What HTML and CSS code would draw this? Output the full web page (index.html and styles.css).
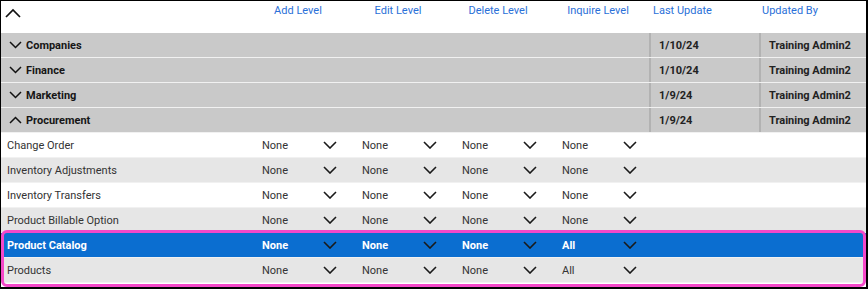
FILE: index.html
```html
<!DOCTYPE html>
<html lang="en">
<head>
<meta charset="UTF-8" />
<meta name="viewport" content="width=device-width, initial-scale=1" />
<title>Security Levels</title>
<link rel="stylesheet" href="styles.css">
</head>
<body>
<div class="levels">
  <div class="row head">
    <div class="toggle-all">
      <svg width="16" height="10" viewBox="0 0 16 10"><polyline points="1,9 8,2 15,9" fill="none" stroke="#111" stroke-width="1.7"/></svg>
    </div>
    <div class="hd">Add Level</div>
    <div class="hd">Edit Level</div>
    <div class="hd">Delete Level</div>
    <div class="hd">Inquire Level</div>
    <div class="hd hd-date">Last Update</div>
    <div class="hd hd-by">Updated By</div>
  </div>

  <div class="row group">
    <div class="group-name"><svg width="13" height="8" viewBox="0 0 13 8"><polyline points="1,1 6.5,6.5 12,1" fill="none" stroke="#111" stroke-width="1.5"/></svg>Companies</div>
    <div class="date">1/10/24</div>
    <div class="by">Training Admin2</div>
  </div>
  <div class="row group">
    <div class="group-name"><svg width="13" height="8" viewBox="0 0 13 8"><polyline points="1,1 6.5,6.5 12,1" fill="none" stroke="#111" stroke-width="1.5"/></svg>Finance</div>
    <div class="date">1/10/24</div>
    <div class="by">Training Admin2</div>
  </div>
  <div class="row group">
    <div class="group-name"><svg width="13" height="8" viewBox="0 0 13 8"><polyline points="1,1 6.5,6.5 12,1" fill="none" stroke="#111" stroke-width="1.5"/></svg>Marketing</div>
    <div class="date">1/9/24</div>
    <div class="by">Training Admin2</div>
  </div>
  <div class="row group">
    <div class="group-name"><svg width="13" height="8" viewBox="0 0 13 8"><polyline points="1,7 6.5,1.5 12,7" fill="none" stroke="#111" stroke-width="1.5"/></svg>Procurement</div>
    <div class="date">1/9/24</div>
    <div class="by">Training Admin2</div>
  </div>

  <div class="row item">
    <div class="name">Change Order</div>
    <div class="lvl"><span>None</span><svg width="14" height="8" viewBox="0 0 14 8"><polyline points="1,1 7,7 13,1" fill="none" stroke="#1a1a1a" stroke-width="1.6"/></svg></div>
    <div class="lvl"><span>None</span><svg width="14" height="8" viewBox="0 0 14 8"><polyline points="1,1 7,7 13,1" fill="none" stroke="#1a1a1a" stroke-width="1.6"/></svg></div>
    <div class="lvl"><span>None</span><svg width="14" height="8" viewBox="0 0 14 8"><polyline points="1,1 7,7 13,1" fill="none" stroke="#1a1a1a" stroke-width="1.6"/></svg></div>
    <div class="lvl"><span>None</span><svg width="14" height="8" viewBox="0 0 14 8"><polyline points="1,1 7,7 13,1" fill="none" stroke="#1a1a1a" stroke-width="1.6"/></svg></div>
  </div>
  <div class="row item alt">
    <div class="name">Inventory Adjustments</div>
    <div class="lvl"><span>None</span><svg width="14" height="8" viewBox="0 0 14 8"><polyline points="1,1 7,7 13,1" fill="none" stroke="#1a1a1a" stroke-width="1.6"/></svg></div>
    <div class="lvl"><span>None</span><svg width="14" height="8" viewBox="0 0 14 8"><polyline points="1,1 7,7 13,1" fill="none" stroke="#1a1a1a" stroke-width="1.6"/></svg></div>
    <div class="lvl"><span>None</span><svg width="14" height="8" viewBox="0 0 14 8"><polyline points="1,1 7,7 13,1" fill="none" stroke="#1a1a1a" stroke-width="1.6"/></svg></div>
    <div class="lvl"><span>None</span><svg width="14" height="8" viewBox="0 0 14 8"><polyline points="1,1 7,7 13,1" fill="none" stroke="#1a1a1a" stroke-width="1.6"/></svg></div>
  </div>
  <div class="row item">
    <div class="name">Inventory Transfers</div>
    <div class="lvl"><span>None</span><svg width="14" height="8" viewBox="0 0 14 8"><polyline points="1,1 7,7 13,1" fill="none" stroke="#1a1a1a" stroke-width="1.6"/></svg></div>
    <div class="lvl"><span>None</span><svg width="14" height="8" viewBox="0 0 14 8"><polyline points="1,1 7,7 13,1" fill="none" stroke="#1a1a1a" stroke-width="1.6"/></svg></div>
    <div class="lvl"><span>None</span><svg width="14" height="8" viewBox="0 0 14 8"><polyline points="1,1 7,7 13,1" fill="none" stroke="#1a1a1a" stroke-width="1.6"/></svg></div>
    <div class="lvl"><span>None</span><svg width="14" height="8" viewBox="0 0 14 8"><polyline points="1,1 7,7 13,1" fill="none" stroke="#1a1a1a" stroke-width="1.6"/></svg></div>
  </div>
  <div class="row item alt">
    <div class="name">Product Billable Option</div>
    <div class="lvl"><span>None</span><svg width="14" height="8" viewBox="0 0 14 8"><polyline points="1,1 7,7 13,1" fill="none" stroke="#1a1a1a" stroke-width="1.6"/></svg></div>
    <div class="lvl"><span>None</span><svg width="14" height="8" viewBox="0 0 14 8"><polyline points="1,1 7,7 13,1" fill="none" stroke="#1a1a1a" stroke-width="1.6"/></svg></div>
    <div class="lvl"><span>None</span><svg width="14" height="8" viewBox="0 0 14 8"><polyline points="1,1 7,7 13,1" fill="none" stroke="#1a1a1a" stroke-width="1.6"/></svg></div>
    <div class="lvl"><span>None</span><svg width="14" height="8" viewBox="0 0 14 8"><polyline points="1,1 7,7 13,1" fill="none" stroke="#1a1a1a" stroke-width="1.6"/></svg></div>
  </div>
  <div class="row item selected">
    <div class="name">Product Catalog</div>
    <div class="lvl"><span>None</span><svg width="14" height="8" viewBox="0 0 14 8"><polyline points="1,1 7,7 13,1" fill="none" stroke="#1a1a1a" stroke-width="1.6"/></svg></div>
    <div class="lvl"><span>None</span><svg width="14" height="8" viewBox="0 0 14 8"><polyline points="1,1 7,7 13,1" fill="none" stroke="#1a1a1a" stroke-width="1.6"/></svg></div>
    <div class="lvl"><span>None</span><svg width="14" height="8" viewBox="0 0 14 8"><polyline points="1,1 7,7 13,1" fill="none" stroke="#1a1a1a" stroke-width="1.6"/></svg></div>
    <div class="lvl"><span>All</span><svg width="14" height="8" viewBox="0 0 14 8"><polyline points="1,1 7,7 13,1" fill="none" stroke="#1a1a1a" stroke-width="1.6"/></svg></div>
  </div>
  <div class="row item alt">
    <div class="name">Products</div>
    <div class="lvl"><span>None</span><svg width="14" height="8" viewBox="0 0 14 8"><polyline points="1,1 7,7 13,1" fill="none" stroke="#1a1a1a" stroke-width="1.6"/></svg></div>
    <div class="lvl"><span>None</span><svg width="14" height="8" viewBox="0 0 14 8"><polyline points="1,1 7,7 13,1" fill="none" stroke="#1a1a1a" stroke-width="1.6"/></svg></div>
    <div class="lvl"><span>None</span><svg width="14" height="8" viewBox="0 0 14 8"><polyline points="1,1 7,7 13,1" fill="none" stroke="#1a1a1a" stroke-width="1.6"/></svg></div>
    <div class="lvl"><span>All</span><svg width="14" height="8" viewBox="0 0 14 8"><polyline points="1,1 7,7 13,1" fill="none" stroke="#1a1a1a" stroke-width="1.6"/></svg></div>
  </div>

  <!-- callout round the two rows -->
  <div class="callout"></div>
</div>
</body>
</html>
```

FILE: styles.css
```css
* {
  box-sizing: border-box;
}
body {
  margin: 0;
  background: #fff;
  font-family: Roboto, "Liberation Sans", sans-serif;
  font-size: 11px;
  color: #333;
}
.levels {
  position: relative;
  width: 868px;
  height: 289px;
  border: 1px solid #000;
  border-right-width: 2px;
  border-bottom-width: 2px;
  background: #fff;
}
.row {
  display: grid;
  grid-template-columns: 247px repeat(4, 100px) 110px 1fr;
  height: 25px;
  align-items: center;
  border-bottom: 1px solid #f1f1f1;
}
.head {
  height: 32px;
  align-items: start;
  border-bottom: none;
}
.toggle-all {
  padding: 7px 0 0 4px;
  line-height: 0;
}
.hd {
  color: #2a70d8;
  text-align: center;
  padding-top: 3px;
  line-height: 14px;
}
.hd-date {
  text-align: left;
  margin-left: 1px;
  padding-left: 4px;
}
.hd-by {
  text-align: left;
  margin-left: 1px;
  padding-left: 3px;
}
.group {
  background: #c9c9c9;
  color: #161616;
  font-weight: bold;
}
.group-name {
  grid-column: span 5;
  display: flex;
  align-items: center;
  gap: 4px;
  padding-left: 8px;
}
.date,
.by {
  height: 100%;
  display: flex;
  align-items: center;
  margin-left: 1px;
  border-left: 2px solid #b2b2b2;
  padding-left: 8px;
  color: #222;
}
.item {
  background: #fff;
}
.item.alt {
  background: #e6e6e6;
}
.name {
  padding-left: 6px;
}
.lvl {
  display: flex;
  align-items: center;
  padding-left: 14px;
}
.lvl span {
  width: 61px;
}
.lvl svg {
  display: block;
}
.selected {
  background: #0b6ed0;
  color: #fff;
  font-weight: bold;
}
.callout {
  position: absolute;
  left: 0;
  right: 0;
  top: 229px;
  bottom: 0;
  border: 3px solid #f448c9;
  border-radius: 6px;
}
```
